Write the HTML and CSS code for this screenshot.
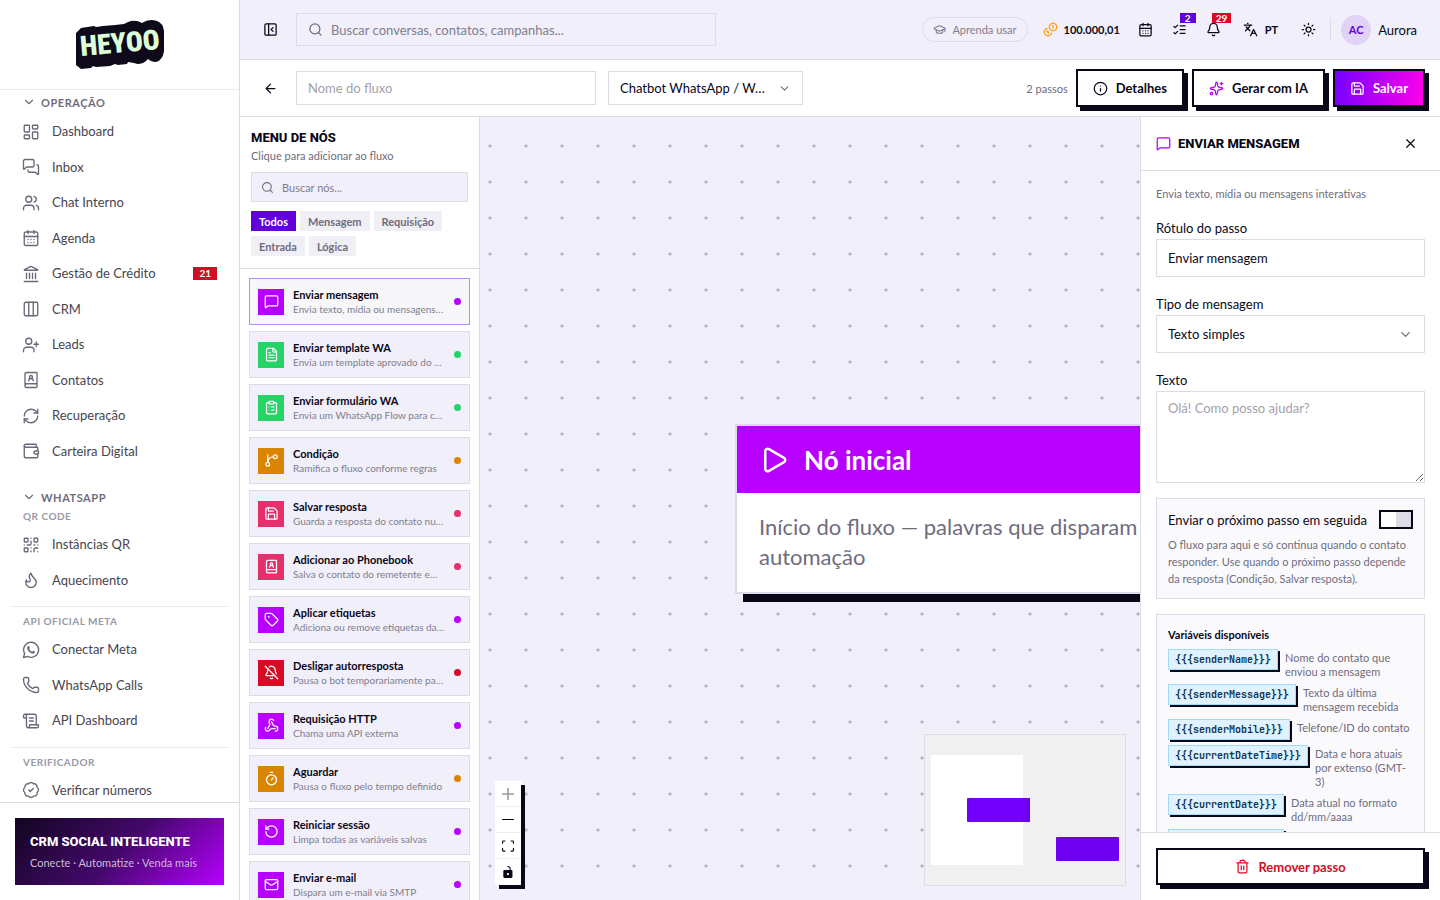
FILE: index.html
```html
<!DOCTYPE html>
<html lang="pt-BR">
<head>
    <meta charset="UTF-8">
    <meta name="viewport" content="width=device-width, initial-scale=1.0">
    <title>Heyoo - Editor de fluxo</title>
    <link rel="stylesheet" href="styles.css">
</head>
<body>
    <svg class="sprite" aria-hidden="true">
        <symbol id="i-dashboard" viewBox="0 0 24 24"><rect x="3" y="3" width="7" height="9" rx="1"/><rect x="14" y="3" width="7" height="5" rx="1"/><rect x="14" y="12" width="7" height="9" rx="1"/><rect x="3" y="16" width="7" height="5" rx="1"/></symbol>
        <symbol id="i-messages" viewBox="0 0 24 24"><path d="M16 10a2 2 0 0 1-2 2H6.828a2 2 0 0 0-1.414.586l-2.202 2.202A.71.71 0 0 1 2 14.286V4a2 2 0 0 1 2-2h10a2 2 0 0 1 2 2z"/><path d="M20 9a2 2 0 0 1 2 2v10.286a.71.71 0 0 1-1.212.502l-2.202-2.202A2 2 0 0 0 17.172 19H10a2 2 0 0 1-2-2v-1"/></symbol>
        <symbol id="i-users" viewBox="0 0 24 24"><path d="M16 21v-2a4 4 0 0 0-4-4H6a4 4 0 0 0-4 4v2"/><circle cx="9" cy="7" r="4"/><path d="M22 21v-2a4 4 0 0 0-3-3.87"/><path d="M16 3.13a4 4 0 0 1 0 7.75"/></symbol>
        <symbol id="i-calendar" viewBox="0 0 24 24"><path d="M8 2v4M16 2v4M3 10h18"/><rect x="3" y="4" width="18" height="18" rx="2"/><path d="M8 14h.01M12 14h.01M16 14h.01M8 18h.01M12 18h.01M16 18h.01"/></symbol>
        <symbol id="i-landmark" viewBox="0 0 24 24"><path d="M10 18v-7M14 18v-7M18 18v-7M6 18v-7M3 22h18"/><path d="M11.12 2.198a2 2 0 0 1 1.76.006l7.866 3.847c.476.233.31.949-.22.949H3.474c-.53 0-.695-.716-.22-.949z"/></symbol>
        <symbol id="i-columns" viewBox="0 0 24 24"><rect x="3" y="3" width="18" height="18" rx="2"/><path d="M9 3v18M15 3v18"/></symbol>
        <symbol id="i-user-plus" viewBox="0 0 24 24"><path d="M16 21v-2a4 4 0 0 0-4-4H6a4 4 0 0 0-4 4v2"/><circle cx="9" cy="7" r="4"/><path d="M19 8v6M22 11h-6"/></symbol>
        <symbol id="i-book-user" viewBox="0 0 24 24"><path d="M15 13a3 3 0 1 0-6 0"/><path d="M4 19.5v-15A2.5 2.5 0 0 1 6.500 2H19a1 1 0 0 1 1 1v18a1 1 0 0 1-1 1H6.500a1 1 0 0 1 0-5H20"/><circle cx="12" cy="8" r="2"/></symbol>
        <symbol id="i-refresh" viewBox="0 0 24 24"><path d="M3 12a9 9 0 0 1 9-9 9.750 9.750 0 0 1 6.740 2.740L21 8"/><path d="M21 3v5h-5"/><path d="M21 12a9 9 0 0 1-9 9 9.750 9.750 0 0 1-6.740-2.740L3 16"/><path d="M8 16H3v5"/></symbol>
        <symbol id="i-wallet" viewBox="0 0 24 24"><path d="M19 7V4a1 1 0 0 0-1-1H5a2 2 0 0 0 0 4h15a1 1 0 0 1 1 1v4h-3a2 2 0 0 0 0 4h3a1 1 0 0 0 1-1v-2a1 1 0 0 0-1-1"/><path d="M3 5v14a2 2 0 0 0 2 2h15a1 1 0 0 0 1-1v-4"/></symbol>
        <symbol id="i-qr" viewBox="0 0 24 24"><rect x="3" y="3" width="5" height="5" rx="1"/><rect x="16" y="3" width="5" height="5" rx="1"/><rect x="3" y="16" width="5" height="5" rx="1"/><path d="M21 16h-3a2 2 0 0 0-2 2v3M21 21v.01M12 7v3a2 2 0 0 1-2 2H7M3 12h.01M12 3h.01M12 16v.01M16 12h1M21 12v.01M12 21v-1"/></symbol>
        <symbol id="i-flame" viewBox="0 0 24 24"><path d="M8.500 14.500A2.500 2.500 0 0 0 11 12c0-1.380-.5-2-1-3-1.072-2.143-.224-4.054 2-6 .5 2.500 2 4.900 4 6.500 2 1.600 3 3.500 3 5.500a7 7 0 1 1-14 0c0-1.153.433-2.294 1-3a2.500 2.500 0 0 0 2.500 2.500z"/></symbol>
        <symbol id="i-whatsapp" viewBox="0 0 24 24"><path d="M2 22l1.500-5.300a10 10 0 1 1 3.900 3.800z"/><path class="solid" d="M8.500 6.800c.5-.3 1-.1 1.200.3l.8 1.900c.1.400 0 .7-.9 1.700.9 1.700 2.100 2.700 3.800 3.500.9-1 1.200-1.300 1.600-1.100l1.900.9c.4.200.5.500.3 1.100-.4 1.300-1.700 1.900-3 1.700-3.700-.7-6.700-3.600-7.300-6.900-.2-1.300.5-2.500 1.600-3.100z"/></symbol>
        <symbol id="i-phone" viewBox="0 0 24 24"><path d="M13.832 16.568a1 1 0 0 0 1.213-.303l.355-.465A2 2 0 0 1 17 15h3a2 2 0 0 1 2 2v3a2 2 0 0 1-2 2A18 18 0 0 1 2 4a2 2 0 0 1 2-2h3a2 2 0 0 1 2 2v3a2 2 0 0 1-.8 1.600l-.468.351a1 1 0 0 0-.292 1.233 14 14 0 0 0 6.392 6.384"/></symbol>
        <symbol id="i-scroll" viewBox="0 0 24 24"><path d="M15 12h-5M15 8h-5M19 17V5a2 2 0 0 0-2-2H4"/><path d="M8 21h12a2 2 0 0 0 2-2v-1a1 1 0 0 0-1-1H11a1 1 0 0 0-1 1v1a2 2 0 1 1-4 0V5a2 2 0 1 0-4 0v2a1 1 0 0 0 1 1h3"/></symbol>
        <symbol id="i-badge-check" viewBox="0 0 24 24"><path d="M3.850 8.620a4 4 0 0 1 4.780-4.770 4 4 0 0 1 6.740 0 4 4 0 0 1 4.780 4.780 4 4 0 0 1 0 6.740 4 4 0 0 1-4.770 4.780 4 4 0 0 1-6.750 0 4 4 0 0 1-4.780-4.770 4 4 0 0 1 0-6.760z"/><path d="m9 12 2 2 4-4"/></symbol>
        <symbol id="i-chevron" viewBox="0 0 24 24"><path d="m6 9 6 6 6-6"/></symbol>
        <symbol id="i-panel" viewBox="0 0 24 24"><rect x="3" y="3" width="18" height="18" rx="2"/><path d="M9 3v18M16 15l-3-3 3-3"/></symbol>
        <symbol id="i-search" viewBox="0 0 24 24"><circle cx="11" cy="11" r="8"/><path d="m21 21-4.300-4.300"/></symbol>
        <symbol id="i-cap" viewBox="0 0 24 24"><path d="M21.420 10.922a1 1 0 0 0-.019-1.838L12.830 5.180a2 2 0 0 0-1.660 0L2.600 9.080a1 1 0 0 0 0 1.832l8.570 3.908a2 2 0 0 0 1.660 0z"/><path d="M22 10v6M6 12.500V16a6 3 0 0 0 12 0v-3.500"/></symbol>
        <symbol id="i-coins" viewBox="0 0 24 24"><path d="M13.744 17.736a6 6 0 1 1-7.480-7.480"/><path d="M15 6h1v4"/><path d="m6.134 14.768.866-.5 2 3.464"/><circle cx="16" cy="8" r="6"/></symbol>
        <symbol id="i-tasks" viewBox="0 0 24 24"><path d="m3 17 2 2 4-4M3 7l2 2 4-4M13 6h8M13 12h8M13 18h8"/></symbol>
        <symbol id="i-bell" viewBox="0 0 24 24"><path d="M10.268 21a2 2 0 0 0 3.464 0"/><path d="M3.262 15.326A1 1 0 0 0 4 17h16a1 1 0 0 0 .740-1.673C19.410 13.956 18 12.499 18 8A6 6 0 0 0 6 8c0 4.499-1.411 5.956-2.738 7.326"/></symbol>
        <symbol id="i-bell-off" viewBox="0 0 24 24"><path d="M10.268 21a2 2 0 0 0 3.464 0"/><path d="M17 17H4a1 1 0 0 1-.740-1.673C4.590 13.956 6 12.499 6 8a6 6 0 0 1 .258-1.742"/><path d="m2 2 20 20"/><path d="M8.668 3.010A6 6 0 0 1 18 8c0 2.687.770 4.653 1.707 6.050"/></symbol>
        <symbol id="i-languages" viewBox="0 0 24 24"><path d="m5 8 6 6M4 14l6-6 2-3M2 5h12M7 2h1M22 22l-5-10-5 10M14 18h6"/></symbol>
        <symbol id="i-sun" viewBox="0 0 24 24"><circle cx="12" cy="12" r="4"/><path d="M12 2v2M12 20v2M4.930 4.930l1.410 1.410M17.660 17.660l1.410 1.410M2 12h2M20 12h2M6.340 17.660l-1.410 1.410M19.070 4.930l-1.410 1.410"/></symbol>
        <symbol id="i-back" viewBox="0 0 24 24"><path d="m12 19-7-7 7-7M19 12H5"/></symbol>
        <symbol id="i-info" viewBox="0 0 24 24"><circle cx="12" cy="12" r="10"/><path d="M12 16v-4M12 8h.01"/></symbol>
        <symbol id="i-sparkles" viewBox="0 0 24 24"><path d="M11.017 2.814a1 1 0 0 1 1.966 0l1.051 5.558a2 2 0 0 0 1.594 1.594l5.558 1.051a1 1 0 0 1 0 1.966l-5.558 1.051a2 2 0 0 0-1.594 1.594l-1.051 5.558a1 1 0 0 1-1.966 0l-1.051-5.558a2 2 0 0 0-1.594-1.594l-5.558-1.051a1 1 0 0 1 0-1.966l5.558-1.051a2 2 0 0 0 1.594-1.594z"/><path d="M20 2v4M22 4h-4"/><circle cx="4" cy="20" r="2"/></symbol>
        <symbol id="i-save" viewBox="0 0 24 24"><path d="M15.200 3a2 2 0 0 1 1.400.6l3.800 3.800a2 2 0 0 1 .6 1.400V19a2 2 0 0 1-2 2H5a2 2 0 0 1-2-2V5a2 2 0 0 1 2-2z"/><path d="M17 21v-7a1 1 0 0 0-1-1H8a1 1 0 0 0-1 1v7M7 3v4a1 1 0 0 0 1 1h7"/></symbol>
        <symbol id="i-message" viewBox="0 0 24 24"><path d="M22 17a2 2 0 0 1-2 2H6.828a2 2 0 0 0-1.414.586l-2.202 2.202A.71.71 0 0 1 2 21.286V5a2 2 0 0 1 2-2h16a2 2 0 0 1 2 2z"/></symbol>
        <symbol id="i-file" viewBox="0 0 24 24"><path d="M15 2H6a2 2 0 0 0-2 2v16a2 2 0 0 0 2 2h12a2 2 0 0 0 2-2V7z"/><path d="M14 2v4a2 2 0 0 0 2 2h4M10 9H8M16 13H8M16 17H8"/></symbol>
        <symbol id="i-clipboard" viewBox="0 0 24 24"><rect x="8" y="2" width="8" height="4" rx="1"/><path d="M16 4h2a2 2 0 0 1 2 2v14a2 2 0 0 1-2 2H6a2 2 0 0 1-2-2V6a2 2 0 0 1 2-2h2M12 11h4M12 16h4M8 11h.01M8 16h.01"/></symbol>
        <symbol id="i-branch" viewBox="0 0 24 24"><path d="M6 3v12"/><circle cx="18" cy="6" r="3"/><circle cx="6" cy="18" r="3"/><path d="M15 6a9 9 0 0 0-9 9"/></symbol>
        <symbol id="i-tag" viewBox="0 0 24 24"><path d="M12.586 2.586A2 2 0 0 0 11.172 2H4a2 2 0 0 0-2 2v7.172a2 2 0 0 0 .586 1.414l8.704 8.704a2.426 2.426 0 0 0 3.420 0l6.580-6.580a2.426 2.426 0 0 0 0-3.420z"/><circle cx="7.500" cy="7.500" r=".5"/></symbol>
        <symbol id="i-webhook" viewBox="0 0 24 24"><path d="M18 16.980h-5.990c-1.100 0-1.950.940-2.480 1.900A4 4 0 0 1 2 17c.010-.7.200-1.400.570-2"/><path d="m6 17 3.130-5.780c.530-.970.100-2.180-.5-3.100a4 4 0 1 1 6.890-4.060"/><path d="m12 6 3.130 5.730C15.660 12.700 16.900 13 18 13a4 4 0 0 1 0 8"/></symbol>
        <symbol id="i-timer" viewBox="0 0 24 24"><path d="M10 2h4M12 14l3-3"/><circle cx="12" cy="14" r="8"/></symbol>
        <symbol id="i-rotate" viewBox="0 0 24 24"><path d="M3 12a9 9 0 1 0 9-9 9.750 9.750 0 0 0-6.740 2.740L3 8"/><path d="M3 3v5h5"/></symbol>
        <symbol id="i-mail" viewBox="0 0 24 24"><rect x="2" y="4" width="20" height="16" rx="2"/><path d="m22 7-8.991 5.727a2 2 0 0 1-2.009 0L2 7"/></symbol>
        <symbol id="i-close" viewBox="0 0 24 24"><path d="M18 6 6 18M6 6l12 12"/></symbol>
        <symbol id="i-play" viewBox="0 0 24 24"><path d="M5 5a2 2 0 0 1 3.008-1.728l11.997 6.998a2 2 0 0 1 .003 3.458l-12 7A2 2 0 0 1 5 19z"/></symbol>
        <symbol id="i-trash" viewBox="0 0 24 24"><path d="M10 11v6M14 11v6M19 6v14a2 2 0 0 1-2 2H7a2 2 0 0 1-2-2V6M3 6h18M8 6V4a2 2 0 0 1 2-2h4a2 2 0 0 1 2 2v2"/></symbol>
    </svg>

    <div class="app">
        <aside class="sidebar">
            <div class="brand">
                <svg class="logo" viewBox="0 0 90 52" role="img" aria-label="Heyoo">
                    <path fill="#0f0a1a" d="M6 9 19 7 21 8 28 7 40 6 49 5 53 3 Q60 0 67 4 Q74-1 82 2 Q88 4 89 12 V32 Q88 41 81 43 Q76 43 73 40 Q67 47 59 44 L53 43 52 45 43 46 40 45 35 47 21 48 18 47 16 49 6 50 1 46 V14 Z"/>
                    <text class="logo-text" x="6" y="37" transform="rotate(-5 6 37)">HEYOO</text>
                </svg>
            </div>
            <nav class="nav">
                <button class="nav-title" type="button"><svg class="icon"><use href="#i-chevron"/></svg>OPERAÇÃO</button>
                <ul>
                    <li><a href="#"><svg class="icon"><use href="#i-dashboard"/></svg>Dashboard</a></li>
                    <li><a href="#"><svg class="icon"><use href="#i-messages"/></svg>Inbox</a></li>
                    <li><a href="#"><svg class="icon"><use href="#i-users"/></svg>Chat Interno</a></li>
                    <li><a href="#"><svg class="icon"><use href="#i-calendar"/></svg>Agenda</a></li>
                    <li><a href="#"><svg class="icon"><use href="#i-landmark"/></svg>Gestão de Crédito<span class="count">21</span></a></li>
                    <li><a href="#"><svg class="icon"><use href="#i-columns"/></svg>CRM</a></li>
                    <li><a href="#"><svg class="icon"><use href="#i-user-plus"/></svg>Leads</a></li>
                    <li><a href="#"><svg class="icon"><use href="#i-book-user"/></svg>Contatos</a></li>
                    <li><a href="#"><svg class="icon"><use href="#i-refresh"/></svg>Recuperação</a></li>
                    <li><a href="#"><svg class="icon"><use href="#i-wallet"/></svg>Carteira Digital</a></li>
                </ul>
                <button class="nav-title" type="button"><svg class="icon"><use href="#i-chevron"/></svg>WHATSAPP</button>
                <h3>QR CODE</h3>
                <ul>
                    <li><a href="#"><svg class="icon"><use href="#i-qr"/></svg>Instâncias QR</a></li>
                    <li><a href="#"><svg class="icon"><use href="#i-flame"/></svg>Aquecimento</a></li>
                </ul>
                <hr>
                <h3>API OFICIAL META</h3>
                <ul>
                    <li><a href="#"><svg class="icon"><use href="#i-whatsapp"/></svg>Conectar Meta</a></li>
                    <li><a href="#"><svg class="icon"><use href="#i-phone"/></svg>WhatsApp Calls</a></li>
                    <li><a href="#"><svg class="icon"><use href="#i-scroll"/></svg>API Dashboard</a></li>
                </ul>
                <hr>
                <h3>VERIFICADOR</h3>
                <ul>
                    <li><a href="#"><svg class="icon"><use href="#i-badge-check"/></svg>Verificar números</a></li>
                </ul>
            </nav>
            <div class="promo">
                <div class="promo-card">
                    <strong>CRM SOCIAL INTELIGENTE</strong>
                    <span>Conecte · Automatize · Venda mais</span>
                </div>
            </div>
        </aside>

        <div class="main">
            <header class="topbar">
                <button class="icon-btn" type="button" aria-label="Recolher menu"><svg class="icon"><use href="#i-panel"/></svg></button>
                <label class="search">
                    <svg class="icon"><use href="#i-search"/></svg>
                    <input type="search" placeholder="Buscar conversas, contatos, campanhas..." aria-label="Buscar">
                </label>
                <div class="top-actions">
                    <a class="learn" href="#"><svg class="icon"><use href="#i-cap"/></svg>Aprenda usar</a>
                    <a class="credits" href="#"><svg class="icon"><use href="#i-coins"/></svg>100.000,01</a>
                    <button class="icon-btn" type="button" aria-label="Agenda"><svg class="icon"><use href="#i-calendar"/></svg></button>
                    <button class="icon-btn" type="button" aria-label="Tarefas"><svg class="icon"><use href="#i-tasks"/></svg><span class="badge">2</span></button>
                    <button class="icon-btn" type="button" aria-label="Notificações"><svg class="icon"><use href="#i-bell"/></svg><span class="badge badge-red">29</span></button>
                    <button class="lang" type="button"><svg class="icon"><use href="#i-languages"/></svg>PT</button>
                    <button class="icon-btn" type="button" aria-label="Tema"><svg class="icon"><use href="#i-sun"/></svg></button>
                    <a class="user" href="#"><span class="avatar">AC</span>Aurora</a>
                </div>
            </header>

            <div class="toolbar">
                <button class="icon-btn" type="button" aria-label="Voltar"><svg class="icon"><use href="#i-back"/></svg></button>
                <input class="field flow-name" type="text" placeholder="Nome do fluxo" aria-label="Nome do fluxo">
                <select class="field flow-type" aria-label="Tipo do fluxo">
                    <option>Chatbot WhatsApp / Webchat</option>
                </select>
                <div class="tool-actions">
                    <span class="steps">2 passos</span>
                    <button class="btn" type="button"><svg class="icon"><use href="#i-info"/></svg>Detalhes</button>
                    <button class="btn btn-ai" type="button"><svg class="icon"><use href="#i-sparkles"/></svg>Gerar com IA</button>
                    <button class="btn btn-save" type="button"><svg class="icon"><use href="#i-save"/></svg>Salvar</button>
                </div>
            </div>

            <div class="editor">
                <section class="palette">
                    <div class="palette-head">
                        <h2>MENU DE NÓS</h2>
                        <p>Clique para adicionar ao fluxo</p>
                        <label class="search search-small">
                            <svg class="icon"><use href="#i-search"/></svg>
                            <input type="search" placeholder="Buscar nós..." aria-label="Buscar nós">
                        </label>
                        <div class="chips">
                            <button class="active" type="button">Todos</button>
                            <button type="button">Mensagem</button>
                            <button type="button">Requisição</button>
                            <button type="button">Entrada</button>
                            <button type="button">Lógica</button>
                        </div>
                    </div>
                    <div class="node-list">
                        <button class="node-item purple selected" type="button"><span class="tile"><svg class="icon"><use href="#i-message"/></svg></span><span class="info"><b>Enviar mensagem</b><small>Envia texto, mídia ou mensagens interativas</small></span><i></i></button>
                        <button class="node-item green" type="button"><span class="tile"><svg class="icon"><use href="#i-file"/></svg></span><span class="info"><b>Enviar template WA</b><small>Envia um template aprovado do WhatsApp</small></span><i></i></button>
                        <button class="node-item green" type="button"><span class="tile"><svg class="icon"><use href="#i-clipboard"/></svg></span><span class="info"><b>Enviar formulário WA</b><small>Envia um WhatsApp Flow para coletar dados</small></span><i></i></button>
                        <button class="node-item orange" type="button"><span class="tile"><svg class="icon"><use href="#i-branch"/></svg></span><span class="info"><b>Condição</b><small>Ramifica o fluxo conforme regras</small></span><i></i></button>
                        <button class="node-item pink" type="button"><span class="tile"><svg class="icon"><use href="#i-save"/></svg></span><span class="info"><b>Salvar resposta</b><small>Guarda a resposta do contato numa variável</small></span><i></i></button>
                        <button class="node-item pink" type="button"><span class="tile"><svg class="icon"><use href="#i-book-user"/></svg></span><span class="info"><b>Adicionar ao Phonebook</b><small>Salva o contato do remetente em uma lista</small></span><i></i></button>
                        <button class="node-item purple" type="button"><span class="tile"><svg class="icon"><use href="#i-tag"/></svg></span><span class="info"><b>Aplicar etiquetas</b><small>Adiciona ou remove etiquetas da conversa</small></span><i></i></button>
                        <button class="node-item red" type="button"><span class="tile"><svg class="icon"><use href="#i-bell-off"/></svg></span><span class="info"><b>Desligar autorresposta</b><small>Pausa o bot temporariamente para o contato</small></span><i></i></button>
                        <button class="node-item purple" type="button"><span class="tile"><svg class="icon"><use href="#i-webhook"/></svg></span><span class="info"><b>Requisição HTTP</b><small>Chama uma API externa</small></span><i></i></button>
                        <button class="node-item orange" type="button"><span class="tile"><svg class="icon"><use href="#i-timer"/></svg></span><span class="info"><b>Aguardar</b><small>Pausa o fluxo pelo tempo definido</small></span><i></i></button>
                        <button class="node-item purple" type="button"><span class="tile"><svg class="icon"><use href="#i-rotate"/></svg></span><span class="info"><b>Reiniciar sessão</b><small>Limpa todas as variáveis salvas</small></span><i></i></button>
                        <button class="node-item purple" type="button"><span class="tile"><svg class="icon"><use href="#i-mail"/></svg></span><span class="info"><b>Enviar e-mail</b><small>Dispara um e-mail via SMTP</small></span><i></i></button>
                    </div>
                </section>

                <main class="canvas">
                    <article class="flow-node">
                        <header><svg class="icon"><use href="#i-play"/></svg>Nó inicial</header>
                        <p>Início do fluxo — palavras que disparam a automação</p>
                    </article>
                    <div class="controls">
                        <button type="button" aria-label="Aproximar" disabled><svg viewBox="0 0 32 32"><path d="M32 18.133H18.133V32h-4.266V18.133H0v-4.266h13.867V0h4.266v13.867H32z"/></svg></button>
                        <button type="button" aria-label="Afastar"><svg viewBox="0 0 32 32"><path d="M0 13.330h32v2.670H0z"/></svg></button>
                        <button type="button" aria-label="Ajustar à tela"><svg viewBox="0 0 32 32"><path d="M0 10V4q0-3 3-3h6v3H3v6zM32 10V4q0-3-3-3h-6v3h6v6zM0 21v7q0 3 3 3h6v-3H3v-7zM32 21v7q0 3-3 3h-6v-3h6v-7z"/></svg></button>
                        <button type="button" aria-label="Bloquear"><svg viewBox="0 0 25 32"><path fill-rule="evenodd" d="M21.333 10.667H19.810V7.619C19.810 3.429 16.380 0 12.190 0c-4.114 1.828-1.370 2.133.305 2.438 1.676.305 4.420 2.590 4.420 5.181v3.048H3.047A3.056 3.056 0 0 0 0 13.714v15.238A3.056 3.056 0 0 0 3.048 32h18.285a3.056 3.056 0 0 0 3.048-3.048V13.714a3.056 3.056 0 0 0-3.048-3.047zM12.190 24.533a3.056 3.056 0 0 1-3.047-3.047 3.056 3.056 0 0 1 3.047-3.048 3.056 3.056 0 0 1 3.048 3.048 3.056 3.056 0 0 1-3.048 3.047z"/></svg></button>
                    </div>
                    <svg class="minimap" viewBox="0 0 200 150" role="img" aria-label="Mini mapa">
                        <rect width="200" height="150" fill="#f0f0f0"/>
                        <rect x="6" y="20" width="92" height="110" fill="#fff"/>
                        <rect x="42" y="63" width="63" height="24" rx="1" fill="#7300ff"/>
                        <rect x="98" y="63" width="7" height="24" fill="#6c00ef"/>
                        <rect x="131" y="102" width="63" height="24" rx="1" fill="#6c00ef"/>
                    </svg>
                </main>

                <aside class="panel">
                    <div class="panel-head">
                        <svg class="icon"><use href="#i-message"/></svg>
                        <h2>ENVIAR MENSAGEM</h2>
                        <button class="icon-btn" type="button" aria-label="Fechar"><svg class="icon"><use href="#i-close"/></svg></button>
                    </div>
                    <div class="panel-body">
                        <p class="hint">Envia texto, mídia ou mensagens interativas</p>
                        <div class="form-row">
                            <label for="rotulo">Rótulo do passo</label>
                            <input class="field" id="rotulo" type="text" value="Enviar mensagem">
                        </div>
                        <div class="form-row">
                            <label for="tipo">Tipo de mensagem</label>
                            <select class="field" id="tipo"><option>Texto simples</option></select>
                        </div>
                        <div class="form-row form-text">
                            <label for="texto">Texto</label>
                            <textarea class="field" id="texto" placeholder="Olá! Como posso ajudar?"></textarea>
                        </div>
                        <div class="box">
                            <div class="switch-row">
                                <label for="seguida">Enviar o próximo passo em seguida</label>
                                <input class="switch" id="seguida" type="checkbox" role="switch">
                            </div>
                            <p>O fluxo para aqui e só continua quando o contato responder. Use quando o próximo passo depende da resposta (Condição, Salvar resposta).</p>
                        </div>
                        <div class="box vars">
                            <h4>Variáveis disponíveis</h4>
                            <div class="var"><code>{{{senderName}}}</code><span>Nome do contato que enviou a mensagem</span></div>
                            <div class="var"><code>{{{senderMessage}}}</code><span>Texto da última mensagem recebida</span></div>
                            <div class="var"><code>{{{senderMobile}}}</code><span>Telefone/ID do contato</span></div>
                            <div class="var"><code>{{{currentDateTime}}}</code><span>Data e hora atuais por extenso (GMT-3)</span></div>
                            <div class="var"><code>{{{currentDate}}}</code><span>Data atual no formato dd/mm/aaaa</span></div>
                            <div class="var"><code>{{{currentTime}}}</code><span>Hora atual</span></div>
                        </div>
                    </div>
                    <div class="panel-foot">
                        <button class="btn btn-remove" type="button"><svg class="icon"><use href="#i-trash"/></svg>Remover passo</button>
                    </div>
                </aside>
            </div>
        </div>
    </div>
</body>
</html>
```
FILE: styles.css
```css
:root {
    --ink: #0a0818;
    --muted: #6f6c7d;
    --line: #dddbe8;
    --soft: #f1effa;
    --violet: #6200d9;
    --purple: #b700ff;
    --red: #d60b26;
}
* {
    box-sizing: border-box;
}
body {
    margin: 0;
    font-family: Lato, "Open Sans", sans-serif;
    font-size: 13px;
    color: var(--ink);
    background: #fff;
}
button, input, select, textarea {
    font: inherit;
    color: inherit;
}
button {
    padding: 0;
    border: 0;
    background: none;
    cursor: pointer;
}
a {
    color: inherit;
    text-decoration: none;
}
h2, h3, h4, p, ul {
    margin: 0;
    padding: 0;
}
ul {
    list-style: none;
}
.sprite {
    display: none;
}
.icon {
    flex: none;
    width: 15px;
    height: 15px;
    fill: none;
    stroke: currentColor;
    stroke-width: 2;
    stroke-linecap: round;
    stroke-linejoin: round;
}
.solid {
    fill: currentColor;
    stroke: none;
}
.app {
    display: grid;
    grid-template-columns: 240px 1fr;
    height: 100vh;
}

/* sidebar */
.sidebar {
    display: flex;
    flex-direction: column;
    min-height: 0;
    border-right: 1px solid var(--line);
}
.brand {
    flex: none;
    display: flex;
    justify-content: center;
    align-items: center;
    height: 90px;
    border-bottom: 1px solid #ebebf1;
}
.logo {
    width: 90px;
    height: 52px;
}
.logo-text {
    font-family: "Roboto Condensed", Roboto, sans-serif;
    font-size: 28px;
    font-weight: 900;
    fill: #dcffd8;
}
.nav {
    flex: 1;
    min-height: 0;
    overflow: hidden;
    padding: 3px 11px 0;
}
.nav-title {
    display: flex;
    align-items: center;
    gap: 5px;
    height: 18px;
    margin-bottom: 3px;
    padding-left: 11px;
    font-size: 11px;
    font-weight: 700;
    letter-spacing: 0.05em;
    color: var(--muted);
}
.nav-title .icon {
    width: 14px;
    height: 14px;
}
.nav ul + .nav-title {
    margin-top: 19px;
}
.nav h3 {
    margin-bottom: 4px;
    padding-left: 12px;
    font-size: 10px;
    line-height: 14px;
    font-weight: 700;
    letter-spacing: 0.05em;
    color: #9a98a6;
}
.nav a {
    display: flex;
    align-items: center;
    gap: 12px;
    padding: 8px 11px;
    line-height: 1.5;
    color: #47454f;
}
.nav a .icon {
    width: 18px;
    height: 18px;
    color: #6b6979;
    stroke-width: 1.8;
}
.count {
    margin-left: auto;
    padding: 0 6px;
    font-size: 10px;
    line-height: 13px;
    font-weight: 700;
    color: #fff;
    background: var(--red);
}
.nav hr {
    margin: 8px 0 7px;
    border: 0;
    border-top: 1px solid #e9e7f2;
}
.promo {
    flex: none;
    padding: 15px;
    border-top: 1px solid var(--line);
}
.promo-card {
    display: flex;
    flex-direction: column;
    gap: 7px;
    padding: 16px 15px 15px;
    color: #fff;
    background: linear-gradient(135deg, #12061f 0%, #43086a 50%, var(--purple) 100%);
}
.promo-card strong {
    font-family: Roboto, sans-serif;
    font-size: 13px;
    line-height: 15px;
    font-weight: 800;
}
.promo-card span {
    font-size: 11px;
    line-height: 14px;
    color: #cdbbd8;
}

/* top bar */
.main {
    display: flex;
    flex-direction: column;
    min-width: 0;
    min-height: 0;
}
.topbar, .toolbar {
    flex: none;
    display: flex;
    align-items: center;
    padding: 0 15px;
    border-bottom: 1px solid var(--line);
}
.topbar {
    height: 60px;
    background: var(--soft);
}
.toolbar {
    height: 57px;
}
.icon-btn {
    position: relative;
    display: flex;
    justify-content: center;
    align-items: center;
    width: 30px;
    height: 30px;
}
.topbar > .icon-btn, .toolbar > .icon-btn {
    margin-right: 11px;
}
.search {
    display: flex;
    align-items: center;
    gap: 8px;
    flex: 0 1 420px;
    height: 33px;
    padding: 0 11px;
    border: 1px solid var(--line);
    color: var(--muted);
    background: var(--soft);
}
.search input {
    flex: 1;
    min-width: 0;
    padding: 0;
    border: 0;
    outline: 0;
    background: none;
}
.search input::placeholder {
    color: #807e8d;
}
.top-actions, .tool-actions {
    display: flex;
    align-items: center;
    margin-left: auto;
}
.top-actions {
    gap: 4px;
    padding-right: 8px;
}
.learn {
    display: flex;
    align-items: center;
    gap: 6px;
    height: 25px;
    margin-right: 11px;
    padding: 0 10px;
    border: 1px solid var(--line);
    border-radius: 13px;
    font-size: 11px;
    color: #807e8d;
}
.learn .icon {
    width: 13px;
    height: 13px;
}
.credits {
    display: flex;
    align-items: center;
    gap: 6px;
    margin-right: 7px;
    font-size: 11px;
    font-weight: 700;
}
.credits .icon {
    color: #ff9d0a;
}
.badge {
    position: absolute;
    top: -2px;
    left: 15px;
    min-width: 16px;
    padding: 0 4px;
    font-size: 10px;
    line-height: 10px;
    font-weight: 700;
    text-align: center;
    color: #fff;
    background: var(--violet);
}
.badge-red {
    left: 13px;
    background: var(--red);
}
.lang {
    display: flex;
    align-items: center;
    gap: 7px;
    padding: 0 11px 0 10px;
    font-size: 11px;
    font-weight: 700;
}
.user {
    display: flex;
    align-items: center;
    gap: 7px;
    margin-left: 3px;
    padding-left: 11px;
    background: linear-gradient(var(--line), var(--line)) left center / 1px 23px no-repeat;
}
.avatar {
    display: grid;
    place-items: center;
    width: 30px;
    height: 30px;
    border-radius: 50%;
    font-size: 11px;
    font-weight: 700;
    color: var(--violet);
    background: #e2d2f6;
}

/* toolbar */
.field {
    width: 100%;
    height: 38px;
    padding: 0 11px;
    border: 1px solid var(--line);
    border-radius: 0;
    outline: 0;
    background: #fff;
}
.field::placeholder {
    color: #a3a1ab;
}
select.field {
    appearance: none;
    padding-right: 36px;
    text-overflow: ellipsis;
    background: #fff url("data:image/svg+xml,%3Csvg xmlns='http://www.w3.org/2000/svg' viewBox='0 0 24 24' fill='none' stroke='%236f6c7d' stroke-width='2' stroke-linecap='round' stroke-linejoin='round'%3E%3Cpath d='m6 9 6 6 6-6'/%3E%3C/svg%3E") right 11px center / 15px no-repeat;
}
.flow-name, .flow-type {
    height: 34px;
}
.flow-name {
    flex: 0 1 300px;
    margin-right: 12px;
}
select.flow-type {
    flex: 0 0 195px;
    background-size: 13px;
}
.tool-actions {
    gap: 8px;
}
.steps {
    font-size: 11px;
    color: var(--muted);
}
.btn {
    display: flex;
    justify-content: center;
    align-items: center;
    gap: 8px;
    height: 38px;
    padding: 0 15px;
    border: 2px solid var(--ink);
    font-weight: 700;
    background: #fff;
    box-shadow: 4px 4px 0 var(--ink);
}
.btn-ai .icon {
    color: var(--purple);
}
.btn-save {
    color: #fff;
    background: linear-gradient(100deg, #7300ff, #ff00ea);
}

/* node palette */
.editor {
    flex: 1;
    display: grid;
    grid-template-columns: 240px 1fr 300px;
    min-height: 0;
}
.palette {
    display: flex;
    flex-direction: column;
    min-height: 0;
    overflow: hidden;
    border-right: 1px solid var(--line);
}
.palette-head {
    flex: none;
    padding: 12px 11px;
    border-bottom: 1px solid var(--line);
}
h2 {
    font-family: Roboto, sans-serif;
    font-size: 13px;
    line-height: 18px;
    font-weight: 800;
}
.palette-head p {
    font-size: 11px;
    line-height: 17px;
    color: var(--muted);
}
.search-small {
    height: 30px;
    margin: 8px 0 9px;
    padding: 0 9px;
    font-size: 11px;
}
.search-small .icon {
    width: 13px;
    height: 13px;
}
.chips {
    display: flex;
    flex-wrap: wrap;
    gap: 5px 4px;
}
.chips button {
    height: 20px;
    padding: 0 8px;
    font-size: 11px;
    font-weight: 700;
    color: var(--muted);
    background: #f0eff5;
}
.chips .active {
    color: #fff;
    background: var(--violet);
}
.node-list {
    display: flex;
    flex-direction: column;
    gap: 6px;
    padding: 9px;
}
.node-item {
    flex: none;
    display: flex;
    align-items: center;
    gap: 9px;
    height: 47px;
    padding: 0 8px;
    border: 1px solid var(--line);
    text-align: left;
    background: var(--soft);
}
.node-item.selected {
    border-color: #b98cf0;
    background: #f7f7fa;
}
.tile {
    flex: none;
    display: grid;
    place-items: center;
    width: 26px;
    height: 26px;
    color: #fff;
    background: var(--tone);
}
.info {
    flex: 1;
    min-width: 0;
    display: flex;
    flex-direction: column;
}
.info b {
    font-size: 11px;
    line-height: 15px;
}
.info small {
    overflow: hidden;
    font-size: 10px;
    line-height: 14px;
    text-overflow: ellipsis;
    white-space: nowrap;
    color: #807e8d;
}
.node-item i {
    flex: none;
    width: 7px;
    height: 7px;
    border-radius: 50%;
    background: var(--tone);
}
.purple { --tone: #b700ff; }
.green { --tone: #25d366; }
.orange { --tone: #d98500; }
.pink { --tone: #e6306c; }
.red { --tone: #d60b26; }

/* canvas */
.canvas {
    position: relative;
    overflow: hidden;
    background: radial-gradient(circle, #b3b1bd 1px, transparent 2px) -8px 11px / 36px 36px var(--soft);
}
.flow-node {
    position: absolute;
    left: 255px;
    top: 307px;
    width: 450px;
    border: 2px solid var(--line);
    background: #fff;
    box-shadow: 8px 8px 0 var(--ink);
}
.flow-node header {
    display: flex;
    align-items: center;
    gap: 15px;
    height: 67px;
    padding: 0 22px;
    font-size: 26px;
    font-weight: 700;
    color: #fff;
    background: var(--purple);
}
.flow-node header .icon {
    width: 30px;
    height: 30px;
}
.flow-node p {
    padding: 19px 22px 20px;
    font-size: 22px;
    line-height: 30px;
    color: var(--muted);
}
.controls {
    position: absolute;
    left: 15px;
    bottom: 15px;
    box-shadow: 4px 4px 0 var(--ink);
}
.controls button {
    display: grid;
    place-items: center;
    width: 26px;
    height: 26px;
    border-bottom: 1px solid #eee;
    background: #fff;
}
.controls button:last-child {
    border-bottom: 0;
}
.controls svg {
    width: 12px;
    height: 12px;
    fill: var(--ink);
}
.controls button:disabled svg {
    opacity: 0.4;
}
.minimap {
    position: absolute;
    right: 14px;
    bottom: 14px;
    width: 202px;
    height: 152px;
    border: 1px solid var(--line);
}

/* step panel */
.panel {
    display: flex;
    flex-direction: column;
    min-height: 0;
    border-left: 1px solid var(--line);
}
.panel-head {
    flex: none;
    display: flex;
    align-items: center;
    gap: 7px;
    height: 54px;
    padding: 0 15px;
    border-bottom: 1px solid var(--line);
}
.panel-head > .icon {
    color: var(--purple);
}
.panel-head .icon-btn {
    margin-left: auto;
}
.panel-body {
    flex: 1;
    min-height: 0;
    overflow: hidden;
    padding: 15px;
}
.hint {
    margin-bottom: 17px;
    font-size: 11px;
    line-height: 16px;
    color: var(--muted);
}
.form-row {
    margin-bottom: 18px;
}
.form-row label {
    display: block;
    margin-bottom: 2px;
    line-height: 18px;
}
.form-text {
    margin-bottom: 15px;
}
textarea.field {
    display: block;
    height: 92px;
    padding: 8px 11px;
}
.box {
    margin-bottom: 15px;
    padding: 11px;
    border: 1px solid var(--line);
    background: #fafafd;
}
.switch-row {
    display: flex;
    justify-content: space-between;
    align-items: center;
    margin-bottom: 7px;
}
.switch {
    appearance: none;
    width: 34px;
    height: 19px;
    margin: 0;
    border: 2px solid var(--ink);
    background: linear-gradient(90deg, #fff 50%, var(--line) 50%);
}
.box p {
    font-size: 11px;
    line-height: 17px;
    color: var(--muted);
}
.vars h4 {
    margin-bottom: 6px;
    font-size: 11px;
    line-height: 17px;
}
.var {
    display: flex;
    align-items: flex-start;
    gap: 7px;
    margin-bottom: 5px;
}
.var code {
    flex: none;
    padding: 0 6px;
    border: 1px solid #9fdcfa;
    font-family: "JetBrains Mono", "DejaVu Sans Mono", monospace;
    font-size: 10px;
    line-height: 19px;
    font-weight: 700;
    color: #0c3450;
    background: #e0f2ff;
    box-shadow: 2px 2px 0 var(--ink);
}
.var span {
    padding-top: 2px;
    font-size: 11px;
    line-height: 14px;
    color: var(--muted);
}
.panel-foot {
    flex: none;
    padding: 15px;
    border-top: 1px solid var(--line);
}
.btn-remove {
    width: 100%;
    height: 37px;
    color: var(--red);
}
```
